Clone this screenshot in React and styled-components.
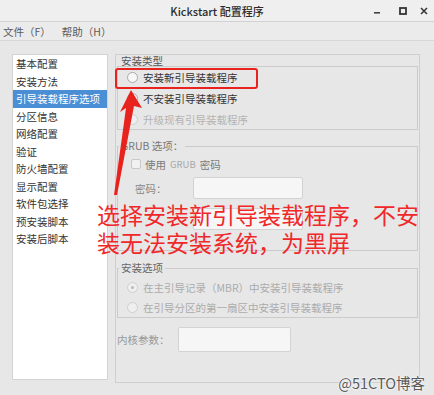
import React from "react";
import styled, { createGlobalStyle } from "styled-components";

const Global = createGlobalStyle`
  html, body { margin: 0; padding: 0; background: #e8e8e8; }
  #root { width: 434px; height: 395px; overflow: hidden; }
  * { box-sizing: border-box; }
`;

const Window = styled.div`
  width: 434px;
  height: 395px;
  position: relative;
  overflow: hidden;
  background: #e7e7e7;
  font-family: "Noto Sans CJK SC", "Noto Sans", sans-serif;
  color: #333;
`;

const TitleBar = styled.div`
  height: 22px;
  display: grid;
  grid-template-columns: 1fr auto 1fr;
  align-items: center;
  background: #efefef;
  border-bottom: 1px solid #d2d2d2;
`;

const Title = styled.div`
  grid-column: 2;
  font-size: 11px;
  line-height: 14px;
  color: #2c2c2c;
  font-weight: 500;
`;

const Controls = styled.div`
  justify-self: end;
  display: grid;
  grid-template-columns: 26px 26px 16px;
  padding-right: 2px;
  align-items: center;
  justify-items: center;
`;

const MenuBar = styled.div`
  height: 19px;
  display: flex;
  align-items: center;
  gap: 11px;
  padding-left: 3px;
  font-size: 10.5px;
  color: #5a5a5a;
  background: #ebebeb;
  border-bottom: 1px solid #d6d6d6;
`;

const Main = styled.div`
  display: flex;
  gap: 7px;
  padding: 13px 0 0 12px;
`;

const Sidebar = styled.div`
  width: 96px;
  height: 326px;
  background: #fff;
  border: 1px solid #d3d3d3;
`;

const NavItem = styled.div`
  height: 17.5px;
  line-height: 17.5px;
  padding-left: 3px;
  font-size: 10.5px;
  white-space: nowrap;
  color: ${(p) => (p.$active ? "#fff" : "#333")};
  background: ${(p) => (p.$active ? "#4a8ed6" : "transparent")};
`;

const RightPanel = styled.div`
  width: 305px;
  height: 329px;
  border: 1px solid #cfcfcf;
  padding: 0 1px;
  display: flex;
  flex-direction: column;
`;

const SectionLabel = styled.div`
  margin-top: 1px;
  padding-left: 4px;
  font-size: 10.5px;
  line-height: 10px;
  color: #555;
`;

const Box = styled.div`
  height: 64px;
  border: 1px solid #cbcbcb;
`;

const Frame = styled.fieldset`
  margin: ${(p) => p.$mt}px 0 0 0;
  padding: ${(p) => p.$pt}px 0 ${(p) => p.$pb}px 0;
  border: 1px solid #cbcbcb;
  min-width: 0;
`;

const Legend = styled.legend`
  margin-left: 1px;
  padding: 0 2px;
  font-size: 10.5px;
  line-height: 12px;
  color: ${(p) => p.$color || "#777"};
`;

const OptionRow = styled.div`
  height: ${(p) => p.$h}px;
  display: flex;
  align-items: center;
  gap: 5px;
  padding-left: 9px;
  font-size: 10.5px;
  color: ${(p) => p.$color};
  white-space: nowrap;
`;

const Radio = styled.span`
  width: 11px;
  height: 11px;
  border-radius: 50%;
  border: 1px solid ${(p) => (p.$disabled ? "#cfcfcf" : "#a9a9a9")};
  background: ${(p) => (p.$disabled ? "#efefef" : "#f7f7f7")};
  display: flex;
  align-items: center;
  justify-content: center;
  flex: none;
  &::after {
    content: "";
    width: 3px;
    height: 3px;
    border-radius: 50%;
    background: ${(p) => (p.$checked ? "#b8b8b8" : "transparent")};
  }
`;

const CheckRow = styled.div`
  height: 22px;
  display: flex;
  align-items: center;
  gap: 4px;
  padding-left: 13px;
  font-size: 10.5px;
  color: #7a7a7a;
  margin-top: 1px;
`;

const Check = styled.span`
  width: 10px;
  height: 10px;
  border: 1px solid #c9c9c9;
  border-radius: 2px;
  background: #f1f1f1;
  flex: none;
`;

const Faint = styled.span`
  color: #a8a8a8;
  font-size: 9.5px;
`;

const FieldRow = styled.div`
  display: grid;
  grid-template-columns: ${(p) => p.$labelW}px ${(p) => p.$inputW}px;
  align-items: center;
  padding-left: ${(p) => p.$pl}px;
  margin-top: ${(p) => p.$mt}px;
  font-size: 10.5px;
  color: ${(p) => p.$color || "#888"};
  white-space: nowrap;
`;

const Input = styled.div`
  height: ${(p) => p.$h}px;
  background: #f6f6f6;
  border: 1px solid #d3d3d3;
  border-radius: 2px;
`;

const Overlay = styled.svg`
  position: absolute;
  left: 0;
  top: 0;
  pointer-events: none;
`;

const RedBox = styled.div`
  position: absolute;
  left: 115px;
  top: 68px;
  width: 143px;
  height: 21px;
  border: 2.5px solid #e8221c;
  border-radius: 3px;
`;

const Annotation = styled.div`
  position: absolute;
  left: 97px;
  top: 200px;
  font-size: 23px;
  line-height: 28px;
  color: #f0282a;
  white-space: nowrap;
  font-family: "Noto Sans CJK SC", sans-serif;
`;

const Watermark = styled.div`
  position: absolute;
  right: 9px;
  top: 374px;
  font-size: 14.5px;
  line-height: 18px;
  color: #5a5a5a;
  text-shadow: 0 0 2px #fff, 0 0 2px #fff;
  font-family: "Noto Sans CJK SC", sans-serif;
`;

const navItems = [
  "基本配置",
  "安装方法",
  "引导装载程序选项",
  "分区信息",
  "网络配置",
  "验证",
  "防火墙配置",
  "显示配置",
  "软件包选择",
  "预安装脚本",
  "安装后脚本",
];

export default function App() {
  return (
    <>
      <Global />
      <Window>
        <TitleBar>
          <Title>Kickstart 配置程序</Title>
          <Controls>
            <svg width="8" height="8" viewBox="0 0 8 8">
              <rect x="1" y="5" width="6" height="1.6" fill="#444" />
            </svg>
            <svg width="8" height="8" viewBox="0 0 8 8">
              <rect x="1" y="1" width="6" height="6" fill="none" stroke="#333" strokeWidth="1.8" />
            </svg>
            <svg width="8" height="8" viewBox="0 0 8 8">
              <path d="M1 1 L7 7 M7 1 L1 7" stroke="#333" strokeWidth="1.5" />
            </svg>
          </Controls>
        </TitleBar>
        <MenuBar>
          <span>文件（F）</span>
          <span>帮助（H）</span>
        </MenuBar>
        <Main>
          <Sidebar>
            {navItems.map((t, i) => (
              <NavItem key={t} $active={i === 2}>
                {t}
              </NavItem>
            ))}
          </Sidebar>
          <RightPanel>
            <SectionLabel>安装类型</SectionLabel>
            <Box>
              <OptionRow $h={21} $color="#333">
                <Radio />
                安装新引导装载程序
              </OptionRow>
              <OptionRow $h={21} $color="#333">
                <Radio />
                不安装引导装载程序
              </OptionRow>
              <OptionRow $h={21} $color="#b3b3b3">
                <Radio $disabled />
                升级现有引导装载程序
              </OptionRow>
            </Box>
            <Frame $mt={10} $pt={0} $pb={20}>
              <Legend>GRUB 选项：</Legend>
              <CheckRow>
                <Check />
                使用 <Faint>GRUB</Faint> 密码
              </CheckRow>
              <FieldRow $labelW={58} $inputW={110} $pl={17} $mt={2}>
                <span>密码：</span>
                <Input $h={22} />
              </FieldRow>
              <FieldRow $labelW={58} $inputW={110} $pl={17} $mt={9}>
                <span />
                <Input $h={22} />
              </FieldRow>
            </Frame>
            <Frame $mt={11} $pt={3} $pb={0}>
              <Legend $color="#666">安装选项</Legend>
              <OptionRow $h={20} $color="#ababab">
                <Radio $disabled $checked />
                在主引导记录（MBR）中安装引导装载程序
              </OptionRow>
              <OptionRow $h={20} $color="#ababab">
                <Radio $disabled />
                在引导分区的第一扇区中安装引导装载程序
              </OptionRow>
            </Frame>
            <FieldRow $labelW={61} $inputW={113} $pl={0} $mt={9} $color="#999">
              <span>内核参数：</span>
              <Input $h={25} />
            </FieldRow>
          </RightPanel>
        </Main>
        <RedBox />
        <Overlay width="434" height="395" viewBox="0 0 434 395">
          <polygon
            points="131,90 142,108 134,106 117,195 114,195 126,108 120,112"
            fill="#e8221c"
          />
        </Overlay>
        <Annotation>
          选择安装新引导装载程序，不安
          <br />
          装无法安装系统，为黑屏
        </Annotation>
        <Watermark>@51CTO博客</Watermark>
      </Window>
    </>
  );
}
